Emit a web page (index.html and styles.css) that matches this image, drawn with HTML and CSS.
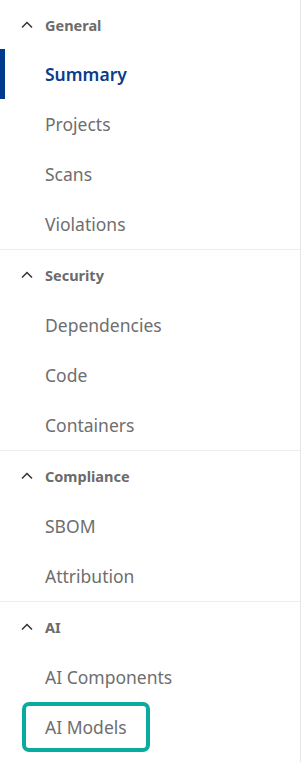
FILE: index.html
```html
<!DOCTYPE html>
<html lang="en">

<head>
	<meta charset="UTF-8">
	<meta name="viewport" content="width=device-width, initial-scale=1.0">
	<title>Navigation</title>
	<link rel="stylesheet" href="styles.css">
</head>

<body>
	<nav class="side-nav">
		<div class="nav-section">
			<div class="nav-heading">
				<svg class="chevron" width="12" height="8" viewBox="0 0 12 8"><path d="M1 6.5 L6 1.5 L11 6.5" /></svg>
				<span>General</span>
			</div>
			<a class="nav-item active" href="#">Summary</a>
			<a class="nav-item" href="#">Projects</a>
			<a class="nav-item" href="#">Scans</a>
			<a class="nav-item" href="#">Violations</a>
		</div>

		<div class="nav-section">
			<div class="nav-heading">
				<svg class="chevron" width="12" height="8" viewBox="0 0 12 8"><path d="M1 6.5 L6 1.5 L11 6.5" /></svg>
				<span>Security</span>
			</div>
			<a class="nav-item" href="#">Dependencies</a>
			<a class="nav-item" href="#">Code</a>
			<a class="nav-item" href="#">Containers</a>
		</div>

		<div class="nav-section">
			<div class="nav-heading">
				<svg class="chevron" width="12" height="8" viewBox="0 0 12 8"><path d="M1 6.5 L6 1.5 L11 6.5" /></svg>
				<span>Compliance</span>
			</div>
			<a class="nav-item" href="#">SBOM</a>
			<a class="nav-item" href="#">Attribution</a>
		</div>

		<div class="nav-section">
			<div class="nav-heading">
				<svg class="chevron" width="12" height="8" viewBox="0 0 12 8"><path d="M1 6.5 L6 1.5 L11 6.5" /></svg>
				<span>AI</span>
			</div>
			<a class="nav-item" href="#">AI Components</a>
			<a class="nav-item focused" href="#">AI Models</a>
		</div>
	</nav>
</body>

</html>
```

FILE: styles.css
```css
body {
	margin: 0;
	font-family: 'Noto Sans', 'Open Sans', sans-serif;
	background: #fff;
}

.side-nav {
	width: 300px;
	height: 762px;
	border-right: 1px solid #e6e6e6;
	overflow: hidden;
}

.nav-section {
	display: flex;
	flex-direction: column;
	border-bottom: 1px solid #ececec;
}

.nav-section:last-child {
	border-bottom: none;
}

.nav-heading {
	display: flex;
	align-items: center;
	gap: 12px;
	height: 50px;
	padding-left: 21px;
	font-size: 14.5px;
	font-weight: 700;
	color: #6b6b6b;
}

.nav-section:first-child .nav-heading {
	height: 49px;
}

.chevron path {
	fill: none;
	stroke: #333;
	stroke-width: 1.5;
}

.nav-item {
	display: flex;
	align-items: center;
	height: 50px;
	padding-left: 40px;
	font-size: 17.5px;
	color: #6e6e6e;
	text-decoration: none;
	border-left: 5px solid transparent;
	box-sizing: border-box;
}

.nav-item.active {
	border-left-color: #003a8c;
	color: #0b3b8c;
	font-weight: 600;
}

.nav-item.focused {
	align-self: flex-start;
	border: 4px solid #0aab9f;
	border-radius: 7px;
	margin-left: 22px;
	padding: 0 19px;
}
```
